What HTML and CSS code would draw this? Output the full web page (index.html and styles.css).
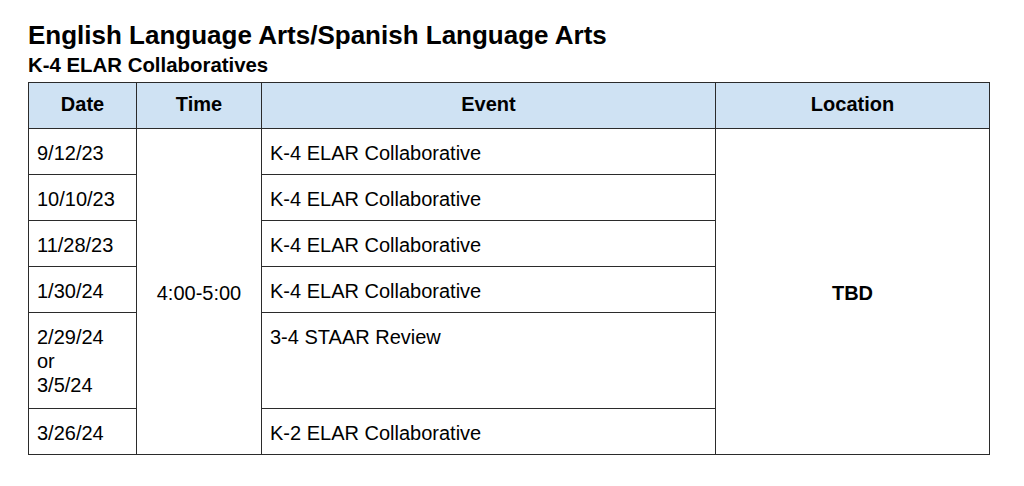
FILE: index.html
```html
<!DOCTYPE html>
<html>
<head>
<meta charset="utf-8">
<link rel="stylesheet" href="styles.css">
</head>
<body>
<div class="page">
  <h1 class="title">English Language Arts/Spanish Language Arts</h1>
  <h2 class="subtitle">K-4 ELAR Collaboratives</h2>
  <table class="schedule">
    <colgroup>
      <col class="c-date">
      <col class="c-time">
      <col class="c-event">
      <col class="c-loc">
    </colgroup>
    <thead>
      <tr>
        <th>Date</th>
        <th>Time</th>
        <th>Event</th>
        <th>Location</th>
      </tr>
    </thead>
    <tbody>
      <tr>
        <td>9/12/23</td>
        <td class="mid" rowspan="6">4:00-5:00</td>
        <td>K-4 ELAR Collaborative</td>
        <td class="mid loc" rowspan="6">TBD</td>
      </tr>
      <tr>
        <td>10/10/23</td>
        <td>K-4 ELAR Collaborative</td>
      </tr>
      <tr>
        <td>11/28/23</td>
        <td>K-4 ELAR Collaborative</td>
      </tr>
      <tr>
        <td>1/30/24</td>
        <td>K-4 ELAR Collaborative</td>
      </tr>
      <tr class="tall">
        <td>2/29/24<br>or<br>3/5/24</td>
        <td>3-4 STAAR Review</td>
      </tr>
      <tr>
        <td>3/26/24</td>
        <td>K-2 ELAR Collaborative</td>
      </tr>
    </tbody>
  </table>
</div>
</body>
</html>
```
FILE: styles.css
```css
html, body {
  margin: 0;
  padding: 0;
  background: #ffffff;
}
body {
  font-family: "Liberation Sans", Arial, sans-serif;
  color: #000;
}
.page {
  padding: 20px 0 0 28px;
}
.title {
  margin: 0;
  font-size: 26px;
  font-weight: bold;
  line-height: 30px;
}
.subtitle {
  margin: 3px 0 5px;
  font-size: 20.4px;
  font-weight: bold;
  line-height: 24px;
}
.schedule {
  border-collapse: collapse;
  table-layout: fixed;
  width: 961px;
  font-size: 20px;
  line-height: 24px;
}
.c-date { width: 108px; }
.c-time { width: 125px; }
.c-event { width: 454px; }
.c-loc { width: 274px; }
.schedule th,
.schedule td {
  border: 1px solid #2b2b2b;
  padding: 12px 8px 9px;
  text-align: left;
  vertical-align: top;
}
.schedule th {
  background: #cfe2f3;
  text-align: center;
  font-weight: bold;
  padding: 9px 8px 12px;
}
.schedule td.mid {
  vertical-align: middle;
  text-align: center;
}
.schedule td.loc {
  font-weight: bold;
}
.schedule tr.tall td {
  padding-top: 12px;
  padding-bottom: 11px;
}
```
